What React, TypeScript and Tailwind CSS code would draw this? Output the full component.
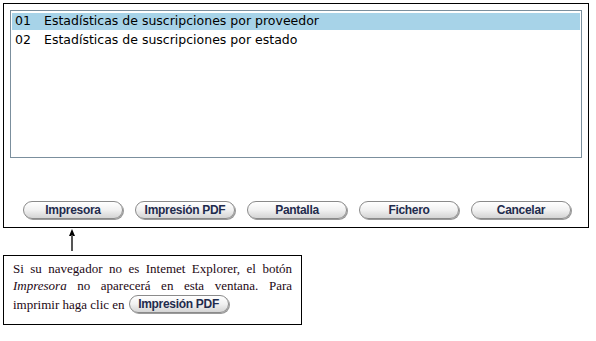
import React from 'react';

const listFont = { fontFamily: '"DejaVu Sans", Verdana, sans-serif' };

const PillButton: React.FC<{ label: string; className?: string }> = ({ label, className = '' }) => (
  <button
    className={`h-[18px] w-[100px] rounded-full border border-[#8a8a8a] bg-gradient-to-b from-white via-[#f1f1f1] to-[#d4d4d4] shadow-[1px_1px_0_#9a9a9a] font-['Liberation_Sans',Arial,sans-serif] text-[12px] font-bold leading-none tracking-[-0.3px] text-[#1f2b4d] ${className}`}
  >
    {label}
  </button>
);

const App: React.FC = () => {
  const rows = [
    { code: '01', label: 'Estadísticas de suscripciones por proveedor', selected: true },
    { code: '02', label: 'Estadísticas de suscripciones por estado', selected: false },
  ];
  const buttons = ['Impresora', 'Impresión PDF', 'Pantalla', 'Fichero', 'Cancelar'];

  return (
    <div className="w-[596px] h-[341px] bg-white pl-[3px] pt-[3px]">
      {/* Dialog */}
      <div className="w-[586px] h-[225px] border border-black px-[6px] pt-[6px] flex flex-col">
        <div className="h-[148px] border border-[#7b8f9d] px-[1px] pt-[2px] flex flex-col gap-[2px]" style={listFont}>
          {rows.map((r) => (
            <div
              key={r.code}
              className={`h-[17px] flex items-center pl-[3px] text-[12.5px] text-black ${r.selected ? 'bg-[#a7d3e8]' : ''}`}
            >
              <span className="w-[29px]">{r.code}</span>
              <span>{r.label}</span>
            </div>
          ))}
        </div>
        <div className="mt-[43px] pl-[13px] flex gap-[12px]">
          {buttons.map((b) => (
            <PillButton key={b} label={b} />
          ))}
        </div>
      </div>

      {/* Arrow */}
      <div className="pl-[65px] pt-[1px] h-[27px]">
        <svg width="10" height="24" viewBox="0 0 10 24">
          <path d="M4 0 L1 7 L7 7 Z" fill="#000" />
          <line x1="4" y1="6" x2="4" y2="22" stroke="#555" strokeWidth="2" />
        </svg>
      </div>

      {/* Note */}
      <div className="w-[299px] h-[70px] border border-black px-[9px] pt-[4px] font-['Liberation_Serif','Times_New_Roman',serif] text-[13px] leading-[17px] text-[#1d0814]">
        <p className="text-justify [text-align-last:justify]">
          Si su navegador no es Intemet Explorer, el botón <i>Impresora</i> no aparecerá en esta ventana. Para
        </p>
        <div className="mt-[1px] flex items-center gap-[4px]">
          <span>imprimir haga clic en</span>
          <PillButton label="Impresión PDF" />
        </div>
      </div>
    </div>
  );
};

export default App;
